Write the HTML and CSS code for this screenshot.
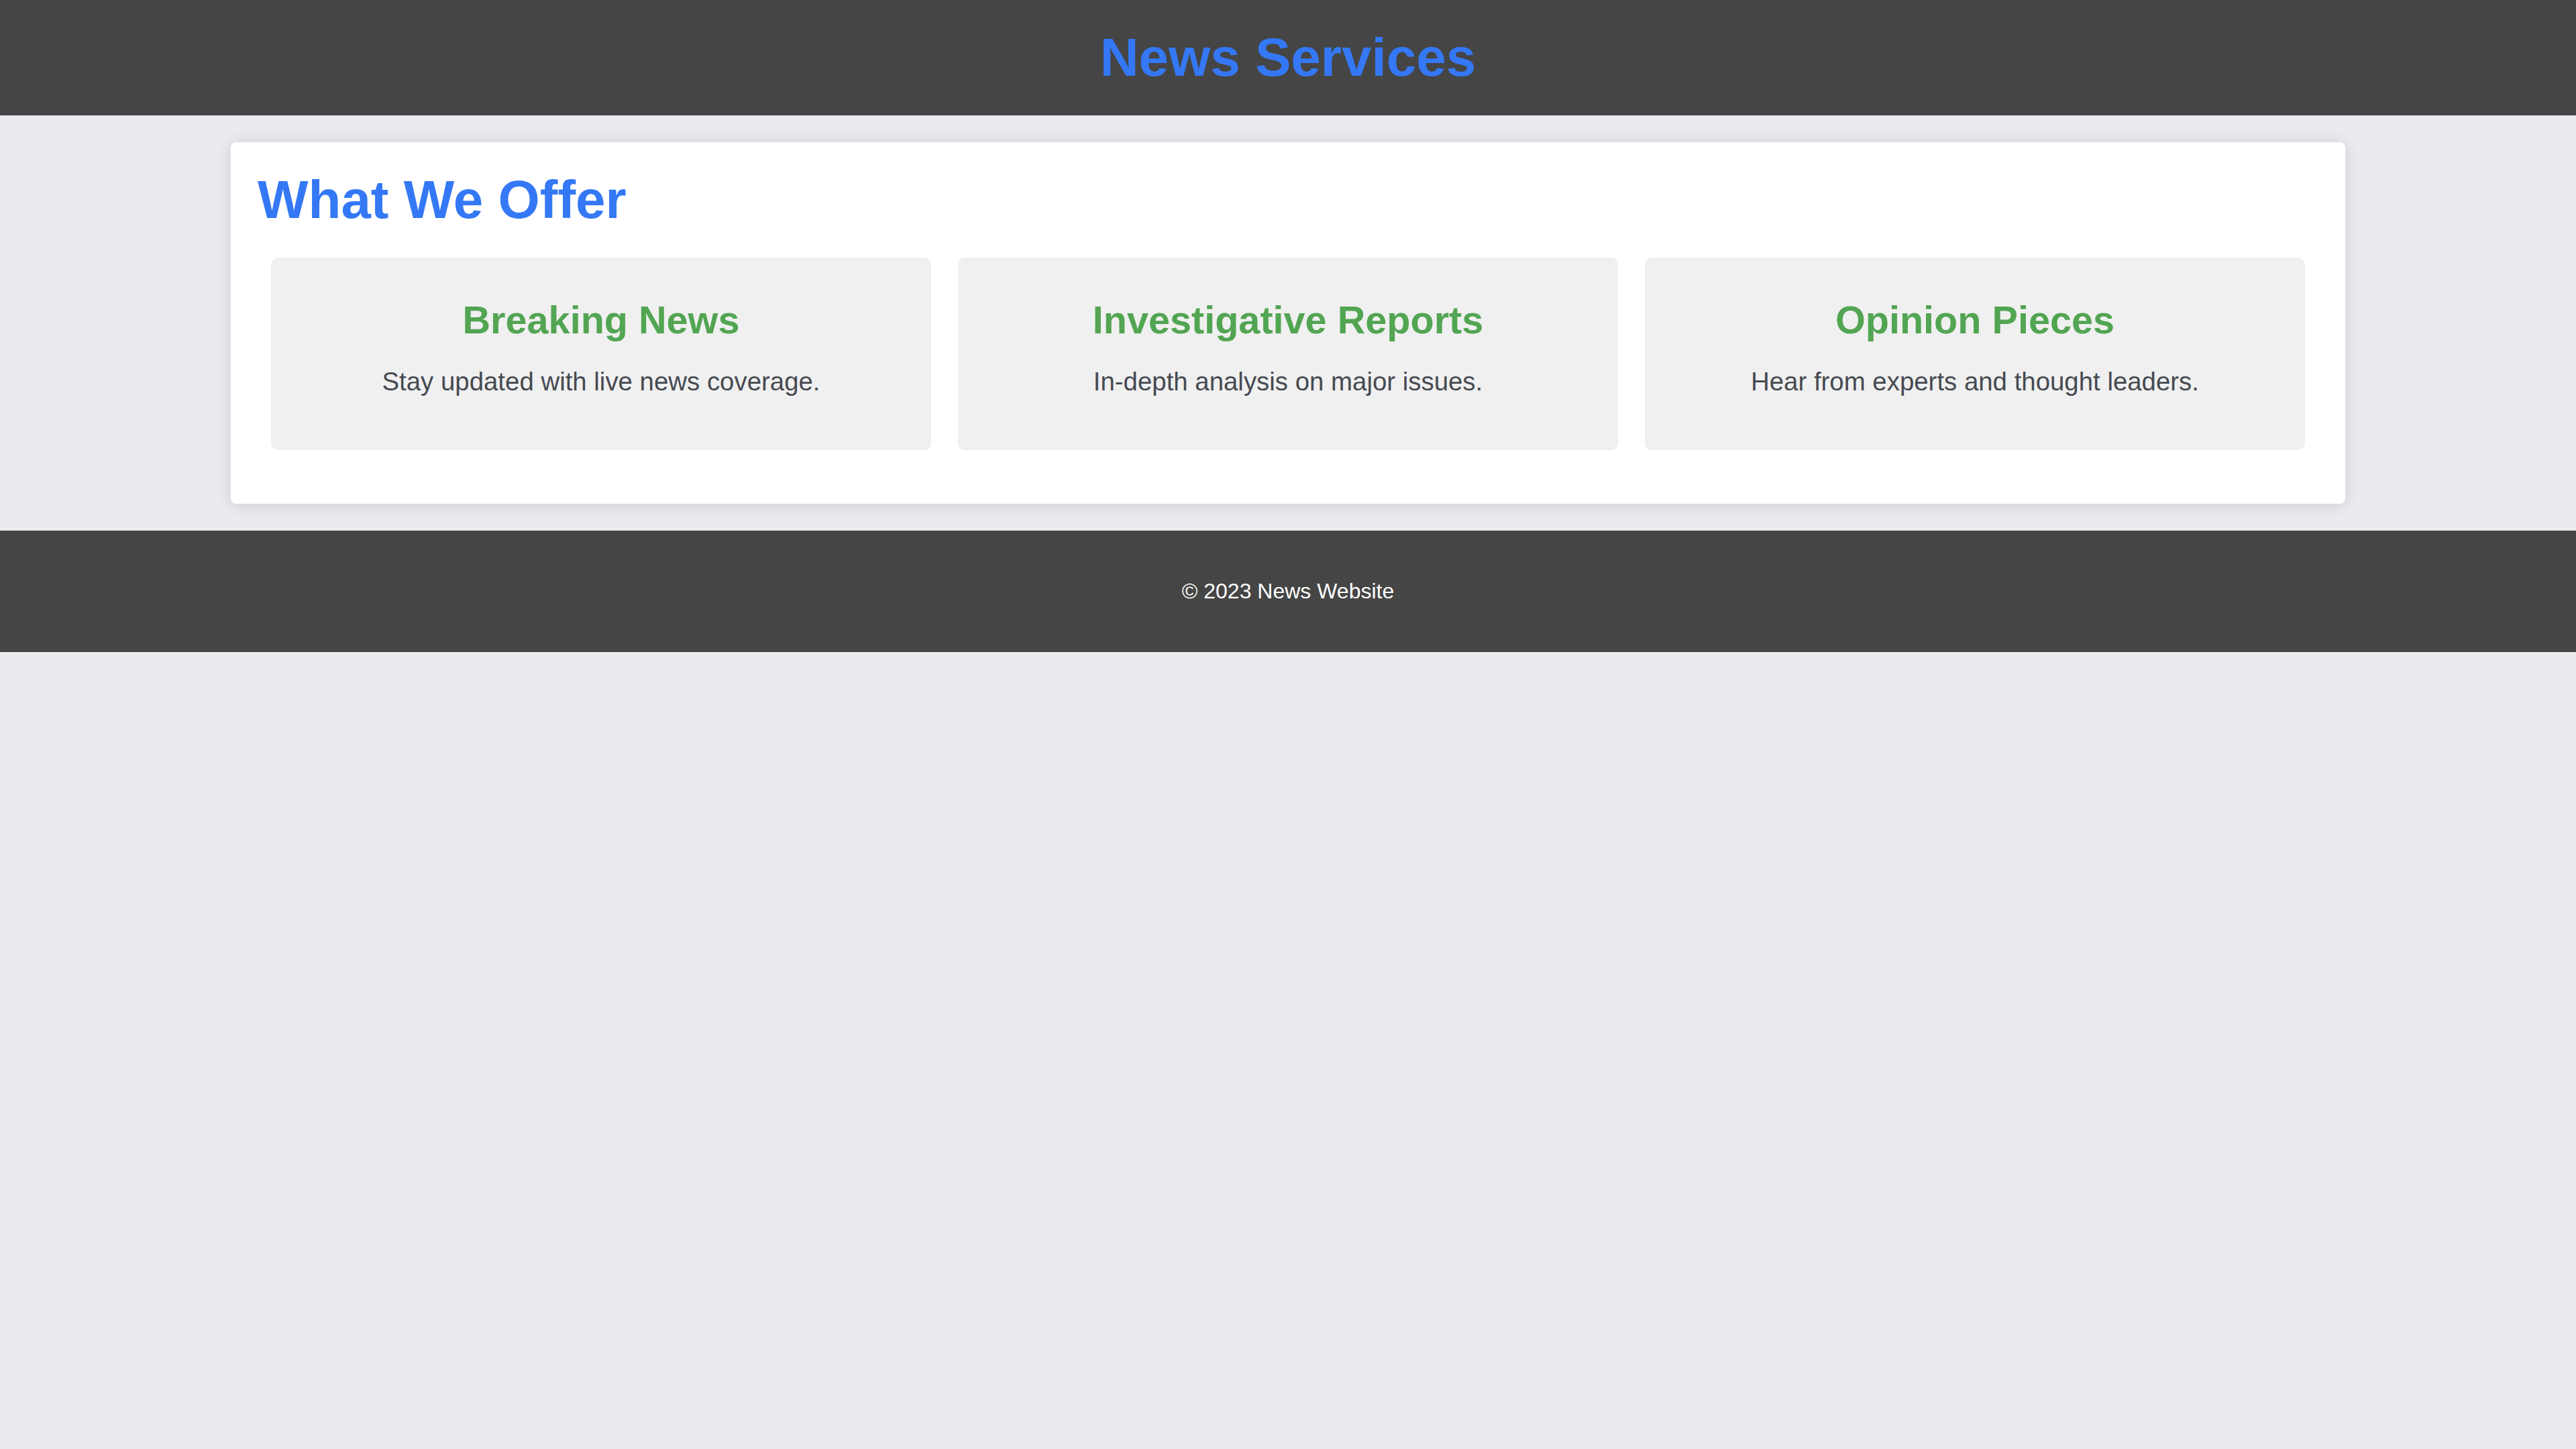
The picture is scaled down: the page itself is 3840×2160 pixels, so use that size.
FILE: index.html
```html
<!DOCTYPE html>
<html lang="en">
<head>
<meta charset="utf-8">
<title>News Services</title>
<link rel="stylesheet" href="styles.css">
</head>
<body>
<header class="site-header">
  <h1 class="site-title">News Services</h1>
</header>
<main class="offer-card">
  <h2 class="offer-title">What We Offer</h2>
  <div class="service-row">
    <section class="service">
      <h3 class="service-name">Breaking News</h3>
      <p class="service-desc">Stay updated with live news coverage.</p>
    </section>
    <section class="service">
      <h3 class="service-name">Investigative Reports</h3>
      <p class="service-desc">In-depth analysis on major issues.</p>
    </section>
    <section class="service">
      <h3 class="service-name">Opinion Pieces</h3>
      <p class="service-desc">Hear from experts and thought leaders.</p>
    </section>
  </div>
</main>
<footer class="site-footer">
  <p class="footer-text">&copy; 2023 News Website</p>
</footer>
</body>
</html>
```
FILE: styles.css
```css
html, body {
  margin: 0;
  padding: 0;
}

body {
  background: #eaebef;
  font-family: "Liberation Sans", Arial, sans-serif;
  line-height: normal;
}

.site-header {
  background: #454545;
  padding: 40px;
  text-align: center;
}

.site-title {
  margin: 0;
  font-size: 80px;
  font-weight: bold;
  color: #3478f6;
}

.offer-card {
  display: block;
  box-sizing: border-box;
  max-width: 3152px;
  margin: 40px auto;
  padding: 40px;
  background: #ffffff;
  border-radius: 8px;
  box-shadow: 0 2px 25px rgba(0, 0, 0, 0.13);
}

.offer-title {
  margin: 0 0 20px;
  font-size: 80px;
  font-weight: bold;
  color: #3478f6;
}

.service-row {
  display: flex;
  margin-bottom: 20px;
}

.service {
  flex: 1 1 0;
  margin: 20px;
  padding: 40px;
  background: #f0f0f0;
  border-radius: 10px;
  text-align: center;
}

.service-name {
  margin: 20px 0 0;
  font-size: 57.6px;
  font-weight: bold;
  color: #52a552;
}

.service-desc {
  margin: 37px 0 40px;
  font-size: 38.4px;
  color: #464a51;
}

.site-footer {
  background: #454545;
  padding: 40px;
  text-align: center;
}

.footer-text {
  margin: 32px 0;
  font-size: 32px;
  color: #ffffff;
}
```
